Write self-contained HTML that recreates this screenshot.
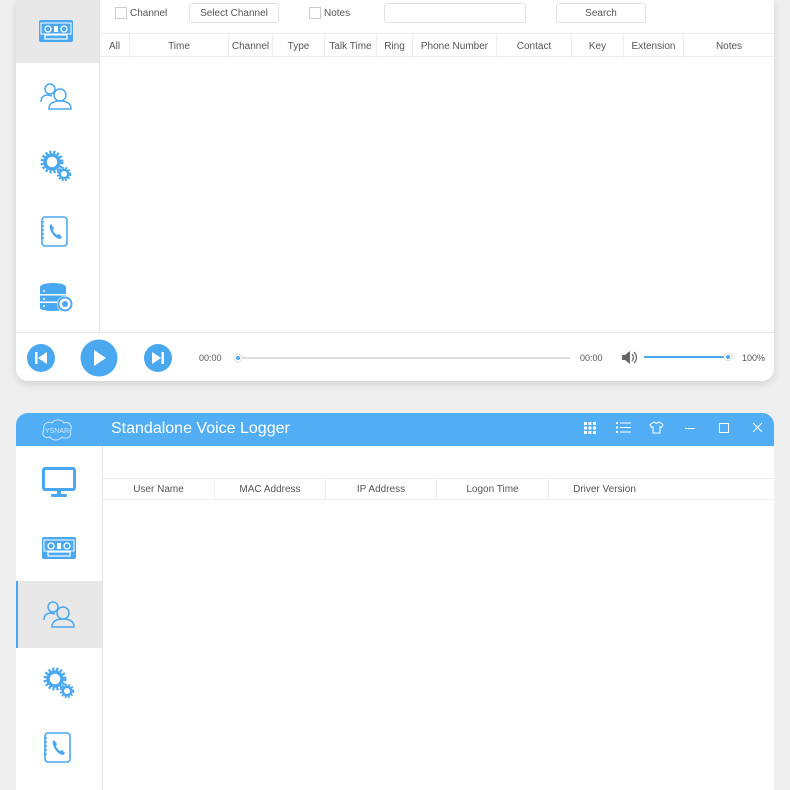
<!DOCTYPE html>
<html><head><meta charset="utf-8"><style>
*{margin:0;padding:0;box-sizing:border-box}
body{width:790px;height:790px;background:#efefef;font-family:"Liberation Sans",sans-serif;position:relative;overflow:hidden;color:#555}
.win{position:absolute;left:16px;width:758px;background:#fff}
.abs{position:absolute}
.t{position:absolute;font-size:10px;color:#555;white-space:nowrap}
.cb{position:absolute;width:12px;height:12px;border:1px solid #ccc;background:#fff}
.btn{position:absolute;border:1px solid #e2e2e2;border-radius:3px;font-size:10px;color:#555;text-align:center;background:#fff}
.hd{position:absolute;font-size:10px;color:#555;text-align:center;top:0;height:24px;line-height:25px;border-right:1px solid #eee}
.ic{position:absolute}
</style></head><body>

<div class="win" style="top:0;height:381px;border-radius:0 0 12px 12px;box-shadow:0 3px 8px rgba(0,0,0,.12)">
  <div class="abs" style="left:0;top:0;width:83px;height:63px;background:#e8e8e8"></div>
  <div class="abs" style="left:83px;top:0;width:1px;height:332px;background:#e4e4e4"></div>
  <div class="cb" style="left:99px;top:7px"></div><div class="t" style="left:114px;top:8px">Channel</div>
  <div class="btn" style="left:173px;top:3px;width:90px;height:20px;line-height:20px">Select Channel</div>
  <div class="cb" style="left:293px;top:7px"></div><div class="t" style="left:308px;top:8px">Notes</div>
  <div class="btn" style="left:368px;top:3px;width:142px;height:20px"></div>
  <div class="btn" style="left:540px;top:3px;width:90px;height:20px;line-height:20px">Search</div>
  <div class="abs" style="left:84px;top:33px;width:674px;height:24px;border-top:1px solid #eee;border-bottom:1px solid #eee">
    <div class="hd" style="left:0;width:30px">All</div>
    <div class="hd" style="left:30px;width:99px">Time</div>
    <div class="hd" style="left:129px;width:44px">Channel</div>
    <div class="hd" style="left:173px;width:52px">Type</div>
    <div class="hd" style="left:225px;width:52px">Talk Time</div>
    <div class="hd" style="left:277px;width:36px">Ring</div>
    <div class="hd" style="left:313px;width:84px">Phone Number</div>
    <div class="hd" style="left:397px;width:75px">Contact</div>
    <div class="hd" style="left:472px;width:52px">Key</div>
    <div class="hd" style="left:524px;width:60px">Extension</div>
    <div class="hd" style="left:584px;width:90px;border:0">Notes</div>
  </div>
  <div class="abs" style="left:0;top:332px;width:758px;height:1px;background:#e8e8e8"></div>
  <svg class="ic" style="left:10px;top:343px" width="30" height="30"><circle cx="15" cy="15" r="14" fill="#4aa8f0"/><rect x="9" y="9" width="2.5" height="12" fill="#fff"/><path d="M21 9 L12 15 L21 21Z" fill="#fff"/></svg>
  <svg class="ic" style="left:64px;top:339px" width="38" height="38"><circle cx="19" cy="19" r="18.5" fill="#4aa8f0"/><path d="M14 11 L26 19 L14 27Z" fill="#fff"/></svg>
  <svg class="ic" style="left:127px;top:343px" width="30" height="30"><circle cx="15" cy="15" r="14" fill="#4aa8f0"/><rect x="18.5" y="9" width="2.5" height="12" fill="#fff"/><path d="M9 9 L18 15 L9 21Z" fill="#fff"/></svg>
  <div class="t" style="left:183px;top:353px;font-size:9px">00:00</div>
  <div class="abs" style="left:222px;top:357px;width:332px;height:2px;background:#ddd"></div>
  <svg class="ic" style="left:217px;top:353px" width="10" height="10"><circle cx="5" cy="5" r="4" fill="#fff" stroke="#ddd"/><circle cx="5" cy="5" r="2" fill="#4aa8f0"/></svg>
  <div class="t" style="left:564px;top:353px;font-size:9px">00:00</div>
  <svg class="ic" style="left:605px;top:350px" width="16" height="15"><path d="M1 5h3l5-4v13l-5-4H1z" fill="#666"/><path d="M11 4q3 3.5 0 7M13 2q5 5.5 0 11" stroke="#666" fill="none" stroke-width="1.3"/></svg>
  <div class="abs" style="left:628px;top:356px;width:84px;height:2px;background:#4aa8f0"></div>
  <svg class="ic" style="left:707px;top:352px" width="10" height="10"><circle cx="5" cy="5" r="4" fill="#fff" stroke="#ddd"/><circle cx="5" cy="5" r="2" fill="#4aa8f0"/></svg>
  <div class="t" style="left:726px;top:353px;font-size:9px">100%</div>
</div>

<div class="win" style="top:413px;height:377px;border-radius:12px 12px 0 0">
  <div class="abs" style="left:0;top:0;width:758px;height:33px;background:#52aef4;border-radius:12px 12px 0 0"></div>
  <svg class="ic" style="left:24px;top:5px" width="34" height="24"><path d="M4 12 C2 6 8 3 12 5 C14 1 22 1 24 5 C30 3 33 9 30 13 C33 19 26 22 22 19 C19 23 12 23 10 19 C4 21 1 16 4 12Z" fill="none" stroke="#cfe6fb" stroke-width="1"/><text x="17" y="15" font-size="7" fill="#cfe6fb" text-anchor="middle" font-family="Liberation Sans">YSNAR</text></svg>
  <div class="t" style="left:95px;top:7px;font-size:16px;color:#fff">Standalone Voice Logger</div>
  <svg class="ic" style="left:568px;top:9px" width="12" height="12" fill="#fff"><rect x="0" y="0" width="3" height="3"/><rect x="4.5" y="0" width="3" height="3"/><rect x="9" y="0" width="3" height="3"/><rect x="0" y="4.5" width="3" height="3"/><rect x="4.5" y="4.5" width="3" height="3"/><rect x="9" y="4.5" width="3" height="3"/><rect x="0" y="9" width="3" height="3"/><rect x="4.5" y="9" width="3" height="3"/><rect x="9" y="9" width="3" height="3"/></svg>
  <svg class="ic" style="left:600px;top:8px" width="15" height="13" fill="#fff"><rect x="0" y="1" width="2" height="2"/><rect x="0" y="5.5" width="2" height="2"/><rect x="0" y="10" width="2" height="2"/><rect x="4" y="1.5" width="11" height="1"/><rect x="4" y="6" width="11" height="1"/><rect x="4" y="10.5" width="11" height="1"/></svg>
  <svg class="ic" style="left:633px;top:8px" width="15" height="13"><path d="M5 1 L1 3.5 L2.5 6.5 L4 5.8 V12 H11 V5.8 L12.5 6.5 L14 3.5 L10 1 Q7.5 3.5 5 1Z" fill="none" stroke="#fff" stroke-width="1"/></svg>
  <div class="abs" style="left:669px;top:15px;width:10px;height:1px;background:#fff"></div>
  <div class="abs" style="left:703px;top:10px;width:10px;height:10px;border:1px solid #fff"></div>
  <svg class="ic" style="left:736px;top:9px" width="11" height="11"><path d="M1 1L10 10M10 1L1 10" stroke="#fff" stroke-width="1"/></svg>
  <div class="abs" style="left:86px;top:33px;width:1px;height:344px;background:#e4e4e4"></div>
  <div class="abs" style="left:0;top:168px;width:86px;height:67px;background:#e8e8e8;border-left:2px solid #4aa8f0"></div>
  <div class="abs" style="left:87px;top:65px;width:671px;height:22px;border-top:1px solid #eee;border-bottom:1px solid #eee">
    <div class="hd" style="left:0;width:112px;height:20px;line-height:21px">User Name</div>
    <div class="hd" style="left:112px;width:111px;height:20px;line-height:21px">MAC Address</div>
    <div class="hd" style="left:223px;width:111px;height:20px;line-height:21px">IP Address</div>
    <div class="hd" style="left:334px;width:112px;height:20px;line-height:21px">Logon Time</div>
    <div class="hd" style="left:446px;width:111px;height:20px;line-height:21px;border:0">Driver Version</div>
  </div>
</div>

<svg class="ic" style="left:39px;top:20px" width="34" height="23"><rect x="0" y="0" width="34" height="22" rx="2" fill="#4aa8f0"/><circle cx="9" cy="9" r="3" fill="none" stroke="#fff" stroke-width="1.3"/><circle cx="25" cy="9" r="3" fill="none" stroke="#fff" stroke-width="1.3"/><rect x="15" y="6" width="4" height="6" fill="#fff"/><rect x="6" y="15" width="22" height="4" fill="none" stroke="#fff" stroke-width="1.2"/><rect x="2" y="3" width="30" height="11" fill="none" stroke="#fff" stroke-width="1"/></svg>
<svg class="ic" style="left:42px;top:537px" width="34" height="23"><rect x="0" y="0" width="34" height="22" rx="2" fill="#4aa8f0"/><circle cx="9" cy="9" r="3" fill="none" stroke="#fff" stroke-width="1.3"/><circle cx="25" cy="9" r="3" fill="none" stroke="#fff" stroke-width="1.3"/><rect x="15" y="6" width="4" height="6" fill="#fff"/><rect x="6" y="15" width="22" height="4" fill="none" stroke="#fff" stroke-width="1.2"/><rect x="2" y="3" width="30" height="11" fill="none" stroke="#fff" stroke-width="1"/></svg>
<svg class="ic" style="left:40px;top:82px" width="34" height="28" fill="none" stroke="#4aa8f0" stroke-width="1.5"><circle cx="10" cy="7" r="5"/><path d="M1 20 Q1 13 8 13 L12 14"/><circle cx="20" cy="13" r="6"/><path d="M9 27 Q9 19 20 19 Q31 19 31 27 Z"/></svg>
<svg class="ic" style="left:43px;top:600px" width="34" height="28" fill="none" stroke="#4aa8f0" stroke-width="1.5"><circle cx="10" cy="7" r="5"/><path d="M1 20 Q1 13 8 13 L12 14"/><circle cx="20" cy="13" r="6"/><path d="M9 27 Q9 19 20 19 Q31 19 31 27 Z"/></svg>
<svg class="ic" style="left:40px;top:150px" width="32" height="32"><circle cx="12" cy="12" r="9" fill="none" stroke="#4aa8f0" stroke-width="5" stroke-dasharray="2 1.6"/><circle cx="12" cy="12" r="7" fill="none" stroke="#4aa8f0" stroke-width="3.5"/><circle cx="24" cy="24" r="5.5" fill="none" stroke="#4aa8f0" stroke-width="3.5" stroke-dasharray="1.6 1.4"/><circle cx="24" cy="24" r="4.2" fill="none" stroke="#4aa8f0" stroke-width="2.4"/></svg>
<svg class="ic" style="left:43px;top:667px" width="32" height="32"><circle cx="12" cy="12" r="9" fill="none" stroke="#4aa8f0" stroke-width="5" stroke-dasharray="2 1.6"/><circle cx="12" cy="12" r="7" fill="none" stroke="#4aa8f0" stroke-width="3.5"/><circle cx="24" cy="24" r="5.5" fill="none" stroke="#4aa8f0" stroke-width="3.5" stroke-dasharray="1.6 1.4"/><circle cx="24" cy="24" r="4.2" fill="none" stroke="#4aa8f0" stroke-width="2.4"/></svg>
<svg class="ic" style="left:40px;top:216px" width="28" height="31"><rect x="2" y="1" width="25" height="29" rx="3" fill="none" stroke="#4aa8f0" stroke-width="1.6"/><path d="M1 6h3M1 10h3M1 14h3M1 18h3M1 22h3" stroke="#4aa8f0" stroke-width="1.4"/><path d="M11 8 Q9 9 10 13 Q13 21 19 23 Q21 23 22 21 L19 18 L17 19 Q14 17 13 14 L14 12 Z" fill="#4aa8f0"/></svg>
<svg class="ic" style="left:43px;top:732px" width="28" height="31"><rect x="2" y="1" width="25" height="29" rx="3" fill="none" stroke="#4aa8f0" stroke-width="1.6"/><path d="M1 6h3M1 10h3M1 14h3M1 18h3M1 22h3" stroke="#4aa8f0" stroke-width="1.4"/><path d="M11 8 Q9 9 10 13 Q13 21 19 23 Q21 23 22 21 L19 18 L17 19 Q14 17 13 14 L14 12 Z" fill="#4aa8f0"/></svg>
<svg class="ic" style="left:39px;top:283px" width="36" height="30"><ellipse cx="14" cy="4" rx="13" ry="4" fill="#4aa8f0"/><rect x="1" y="4" width="26" height="7" fill="#4aa8f0"/><rect x="1" y="12.5" width="26" height="6" fill="#4aa8f0"/><rect x="1" y="20" width="26" height="5" fill="#4aa8f0"/><ellipse cx="14" cy="25" rx="13" ry="3" fill="#4aa8f0"/><circle cx="5" cy="8" r="1" fill="#fff"/><circle cx="5" cy="16" r="1" fill="#fff"/><circle cx="5" cy="23" r="1" fill="#fff"/><circle cx="26" cy="21" r="8" fill="#fff"/><circle cx="26" cy="21" r="6.5" fill="none" stroke="#4aa8f0" stroke-width="2"/><circle cx="26" cy="21" r="3" fill="#4aa8f0"/></svg>
<svg class="ic" style="left:42px;top:467px" width="34" height="32"><rect x="1.5" y="1.5" width="31" height="21" rx="1.5" fill="none" stroke="#4aa8f0" stroke-width="3"/><rect x="15" y="23" width="4" height="5" fill="#4aa8f0"/><rect x="9" y="27" width="16" height="3" rx="1" fill="#4aa8f0"/></svg>
</body></html>
